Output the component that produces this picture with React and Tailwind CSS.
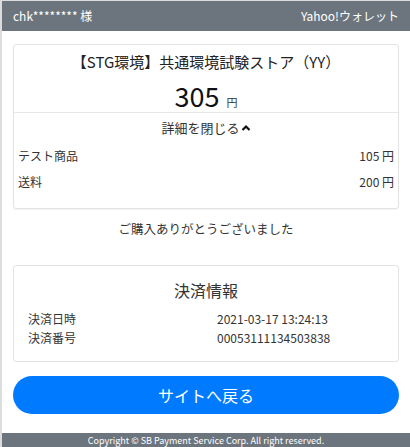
import React from "react";

export default function App() {
  return (
    <div
      className="w-[410px] h-[447px] bg-white flex flex-col border-l-2 border-t border-[#dcdcdc] overflow-hidden text-[#333]"
      style={{ fontFamily: '"Noto Sans CJK JP", "Noto Sans", sans-serif' }}
    >
      <div className="h-[30px] bg-[#6c757d] text-white text-[12px] flex items-center justify-between px-[11px] shrink-0">
        <span>chk******** 様</span>
        <span>Yahoo!ウォレット</span>
      </div>

      <div className="px-[11px] flex flex-col">
        <div className="mt-[13px] border border-[#e3e3e3] rounded-[3px] shadow-[0_1px_1px_rgba(0,0,0,0.05)]">
          <div className="text-center text-[15px] pt-[6px] leading-[22px] text-[#222]">
            【STG環境】共通環境試験ストア（YY）
          </div>
          <div className="h-[39px] pt-[6px] flex items-center justify-center">
            <div className="flex items-baseline leading-none">
              <span className="text-[27px] text-[#111] leading-none">305</span>
              <span className="text-[11px] ml-[7px] leading-none">円</span>
            </div>
          </div>
          <div className="border-t border-[#e6e6e6] pt-[6px] pb-[17px] px-[4px]">
            <div className="text-center text-[13px] leading-[18px] flex items-center justify-center">
              詳細を閉じる
              <svg width="10" height="8" viewBox="0 0 10 8" className="ml-[1px]">
                <path d="M1.5 6 L5 2.5 L8.5 6" stroke="#111" strokeWidth="2.2" fill="none" />
              </svg>
            </div>
            <div className="flex justify-between text-[12px] leading-[18px] mt-[10px]">
              <span>テスト商品</span>
              <span>105 円</span>
            </div>
            <div className="flex justify-between text-[12px] leading-[18px] mt-[8px]">
              <span>送料</span>
              <span>200 円</span>
            </div>
          </div>
        </div>

        <div className="text-center text-[12.5px] mt-[11px] leading-[18px]">
          ご購入ありがとうございました
        </div>

        <div className="mt-[27px] border border-[#e3e3e3] rounded-[3px] px-[14px] pt-[13px] pb-[14px]">
          <div className="text-center text-[16px] leading-[22px]">決済情報</div>
          <div className="mt-[8px] text-[12px] leading-[19px]">
            <div className="flex">
              <span className="w-[189px]">決済日時</span>
              <span>2021-03-17 13:24:13</span>
            </div>
            <div className="flex">
              <span className="w-[189px]">決済番号</span>
              <span>00053111134503838</span>
            </div>
          </div>
        </div>

        <button className="mt-[14px] h-[38px] w-full rounded-full bg-[#007bff] text-white text-[16px] flex items-center justify-center">
          サイトへ戻る
        </button>
      </div>

      <div className="mt-auto h-[14px] bg-[#6c757d] text-white text-[9px] flex items-center justify-center shrink-0 leading-none">
        Copyright © SB Payment Service Corp. All right reserved.
      </div>
    </div>
  );
}
